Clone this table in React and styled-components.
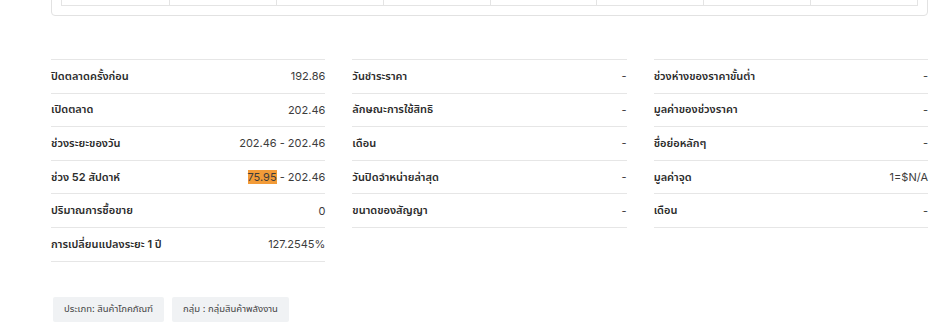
import React from 'react';
import styled, { createGlobalStyle } from 'styled-components';

const GlobalStyle = createGlobalStyle`
  body {
    margin: 0;
    background: #ffffff;
    font-family: Inter, "Noto Sans Thai", "Noto Sans", sans-serif;
    color: #333333;
  }
`;

const Page = styled.div`
  padding: 0 19px 0 51px;
`;

const TopCard = styled.div`
  margin-top: -40px;
  border: 1px solid #e2e2e2;
  border-radius: 4px;
  padding: 0 9px 9px;
`;

const Table = styled.div`
  display: grid;
  grid-template-columns: repeat(8, 1fr);
  border: 1px solid #e4e4e4;
  border-top: none;
`;

const Cell = styled.div`
  height: 44px;
  border-left: ${(p) => (p.first ? 'none' : '1px solid #e4e4e4')};
`;

const Stats = styled.div`
  display: grid;
  grid-template-columns: repeat(3, 1fr);
  column-gap: 27px;
  margin-top: 43px;
  align-items: start;
`;

const Column = styled.div`
  border-top: 1px solid #e6e6e6;
`;

const Row = styled.div`
  display: flex;
  align-items: center;
  justify-content: space-between;
  box-sizing: border-box;
  height: 33.6px;
  border-bottom: 1px solid #e6e6e6;
  font-size: 11px;
`;

const Label = styled.span`
  font-weight: 600;
  color: #2b2b2b;
`;

const Value = styled.span`
  color: #3c3c3c;
  font-size: 11px;
`;

const Mark = styled.span`
  background: #f29b38;
`;

const Tags = styled.div`
  display: flex;
  gap: 8px;
  margin-top: 35px;
  padding-left: 2px;
`;

const Tag = styled.span`
  background: #f0f2f4;
  color: #444444;
  font-size: 9.5px;
  padding: 0 11px;
  height: 25px;
  display: inline-flex;
  align-items: center;
  border-radius: 2px;
`;

const columns = [
  [
    ['ปิดตลาดครั้งก่อน', '192.86'],
    ['เปิดตลาด', '202.46'],
    ['ช่วงระยะของวัน', '202.46 - 202.46'],
    ['ช่วง 52 สัปดาห์', <><Mark>75.95</Mark> - 202.46</>],
    ['ปริมาณการซื้อขาย', '0'],
    ['การเปลี่ยนแปลงระยะ 1 ปี', '127.2545%'],
  ],
  [
    ['วันชำระราคา', '-'],
    ['ลักษณะการใช้สิทธิ', '-'],
    ['เดือน', '-'],
    ['วันปิดจำหน่ายล่าสุด', '-'],
    ['ขนาดของสัญญา', '-'],
  ],
  [
    ['ช่วงห่างของราคาขั้นต่ำ', '-'],
    ['มูลค่าของช่วงราคา', '-'],
    ['ชื่อย่อหลักๆ', '-'],
    ['มูลค่าจุด', '1=$N/A'],
    ['เดือน', '-'],
  ],
];

const App = () => {
  return (
    <Page>
      <GlobalStyle />
      <TopCard>
        <Table>
          {Array.from({ length: 8 }).map((_, i) => (
            <Cell key={i} first={i === 0} />
          ))}
        </Table>
      </TopCard>
      <Stats>
        {columns.map((col, ci) => (
          <Column key={ci}>
            {col.map(([label, value], ri) => (
              <Row key={ri}>
                <Label>{label}</Label>
                <Value>{value}</Value>
              </Row>
            ))}
          </Column>
        ))}
      </Stats>
      <Tags>
        <Tag>ประเภท: สินค้าโภคภัณฑ์</Tag>
        <Tag>กลุ่ม : กลุ่มสินค้าพลังงาน</Tag>
      </Tags>
    </Page>
  );
};

export default App;
